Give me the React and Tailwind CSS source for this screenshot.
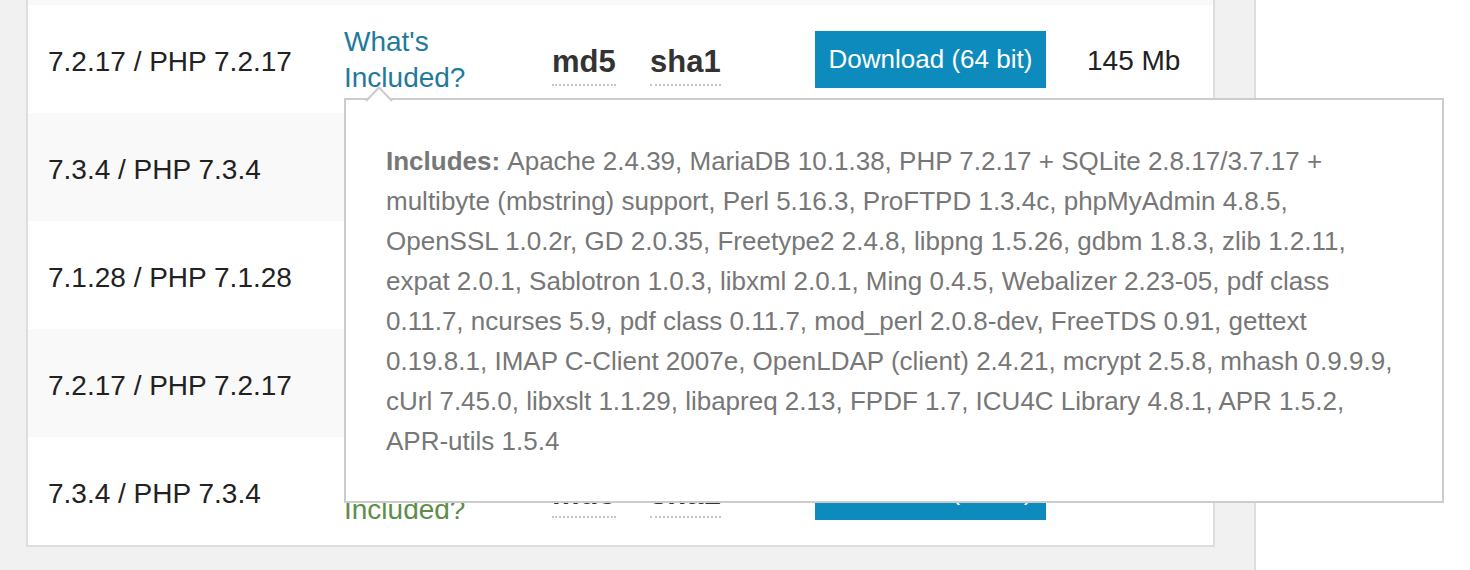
const rows = [
  { version: '7.2.17 / PHP 7.2.17', size: '145 Mb', bits: '64 bit', hover: true },
  { version: '7.3.4 / PHP 7.3.4', size: '151 Mb', bits: '64 bit' },
  { version: '7.1.28 / PHP 7.1.28', size: '144 Mb', bits: '64 bit' },
  { version: '7.2.17 / PHP 7.2.17', size: '145 Mb', bits: '64 bit' },
  { version: '7.3.4 / PHP 7.3.4', size: '151 Mb', bits: '64 bit' },
];

const includes = [
  'Apache 2.4.39, MariaDB 10.1.38, PHP 7.2.17 + SQLite 2.8.17/3.7.17 +',
  'multibyte (mbstring) support, Perl 5.16.3, ProFTPD 1.3.4c, phpMyAdmin 4.8.5,',
  'OpenSSL 1.0.2r, GD 2.0.35, Freetype2 2.4.8, libpng 1.5.26, gdbm 1.8.3, zlib 1.2.11,',
  'expat 2.0.1, Sablotron 1.0.3, libxml 2.0.1, Ming 0.4.5, Webalizer 2.23-05, pdf class',
  '0.11.7, ncurses 5.9, pdf class 0.11.7, mod_perl 2.0.8-dev, FreeTDS 0.91, gettext',
  '0.19.8.1, IMAP C-Client 2007e, OpenLDAP (client) 2.4.21, mcrypt 2.5.8, mhash 0.9.9.9,',
  'cUrl 7.45.0, libxslt 1.1.29, libapreq 2.13, FPDF 1.7, ICU4C Library 4.8.1, APR 1.5.2,',
  'APR-utils 1.5.4',
];

function Hash({ label }) {
  return (
    <span className="mt-[12px] inline-block border-b-2 border-dotted border-[#c4c4c4] pb-[5px] text-[31px] font-bold leading-[34px] text-[#333]">
      {label}
    </span>
  );
}

function Row({ r, striped }) {
  return (
    <div className={`flex h-[108px] items-center ${striped ? 'bg-[#f9f9f9]' : 'bg-white'}`}>
      <div className="mt-[4px] w-[316px] shrink-0 pl-[20px] text-[28px] leading-[35px] text-[#222]">{r.version}</div>
      <div className={`mt-[2px] w-[208px] shrink-0 text-[28px] leading-[36px] ${r.hover ? 'text-[#1f7a9c]' : 'text-[#5e8d48]'}`}>
        What's<br />Included?
      </div>
      <div className="w-[98px] shrink-0"><Hash label="md5" /></div>
      <div className="w-[165px] shrink-0"><Hash label="sha1" /></div>
      <div className="w-[272px] shrink-0">
        <span className="inline-flex h-[57px] w-[231px] items-center justify-center bg-[#0e8bbd] text-[26px] text-white">
          Download ({r.bits})
        </span>
      </div>
      <div className="mt-[2px] text-[28px] leading-[35px] text-[#222]">{r.size}</div>
    </div>
  );
}

export default function App() {
  return (
    <div className="flex h-[570px] w-[1470px] overflow-hidden bg-[#f1f1f1] font-['Liberation_Sans',Arial,sans-serif]">
      <div className="w-[1254px] shrink-0">
        <div className="relative ml-[26px] w-[1189px] border-2 border-t-0 border-[#ddd] bg-white">
          <div className="h-[5px] bg-[#f9f9f9]" />
          {rows.map((r, i) => (
            <Row key={i} r={r} striped={i % 2 === 1} />
          ))}

          {/* tooltip */}
          <div className="absolute left-[316px] top-[98px] z-10 h-[405px] w-[1100px] border-2 border-[#ccc] bg-white pl-[40px] pt-[41px] text-[26px] leading-[40px] text-[#777]">
            <svg className="absolute left-[19px] top-[-14px]" width="28" height="16" viewBox="0 0 28 16">
              <polygon points="1,16 14,2 27,16" fill="#fff" />
              <polyline points="1,15 14,1.5 27,15" fill="none" stroke="#ccc" strokeWidth="2" />
            </svg>
            {includes.map((line, i) => (
              <div key={i} className="whitespace-nowrap">
                {i === 0 && <b className="font-bold text-[#777]">Includes: </b>}
                {line}
              </div>
            ))}
          </div>
        </div>
      </div>
      <div className="flex-1 border-l-2 border-[#ddd] bg-white" />
    </div>
  );
}
